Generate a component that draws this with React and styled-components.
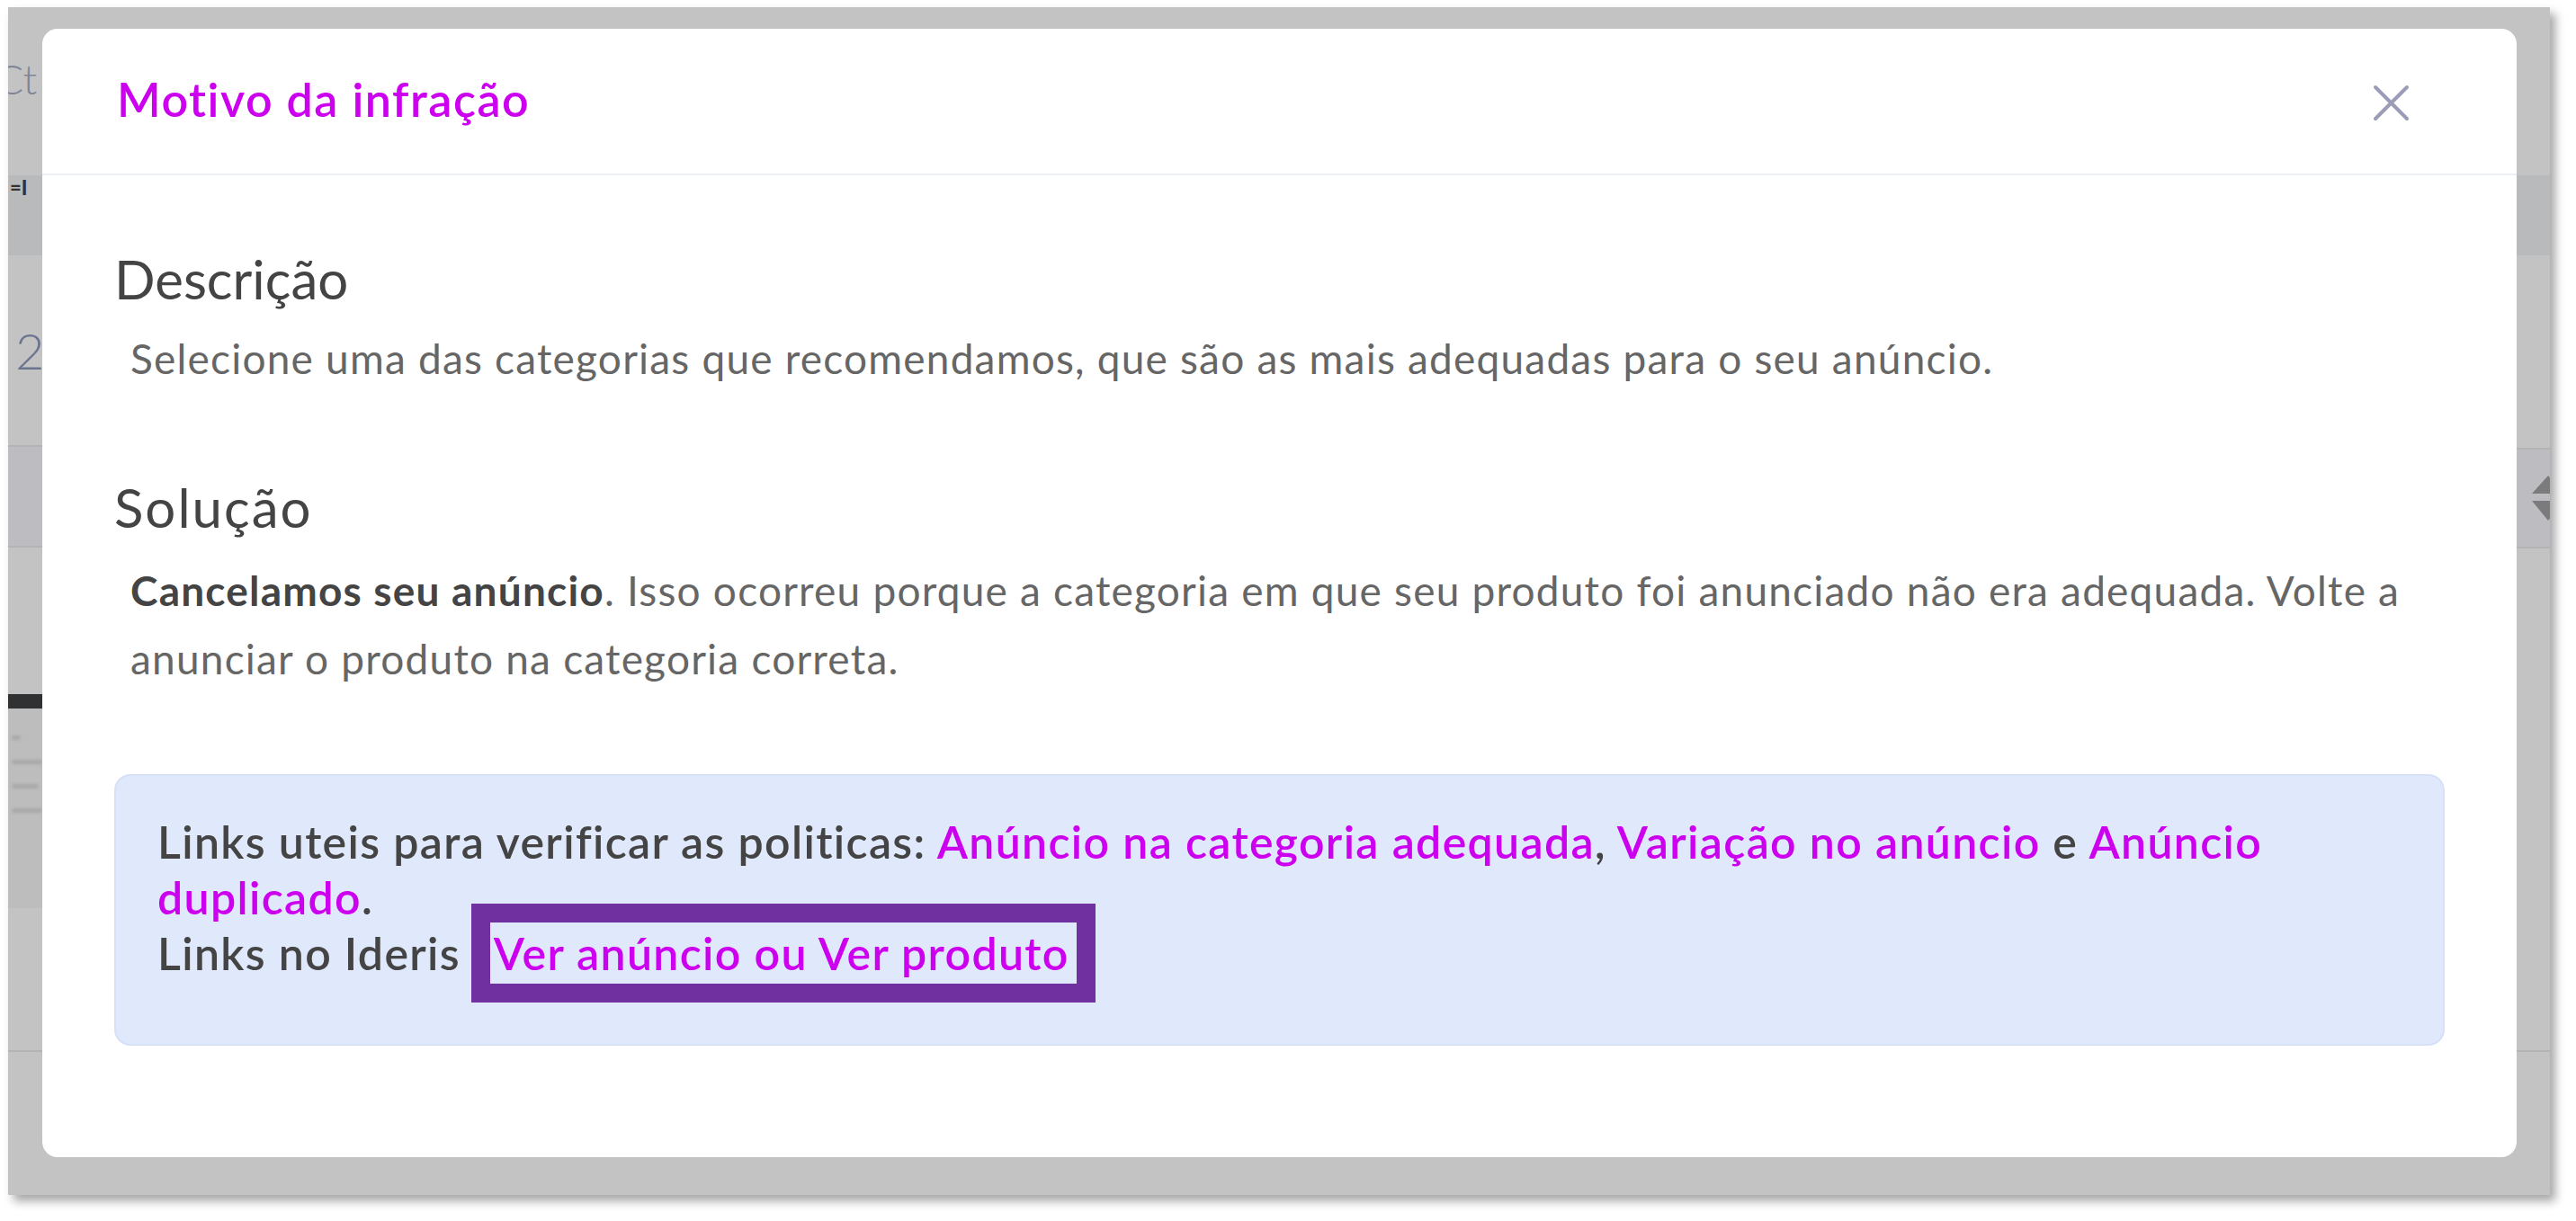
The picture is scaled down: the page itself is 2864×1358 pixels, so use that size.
import React from 'react';
import styled, { createGlobalStyle } from 'styled-components';

const GlobalStyle = createGlobalStyle`
  html, body {
    margin: 0;
    padding: 0;
    background: #ffffff;
  }
  body {
    font-family: Lato, "Open Sans", sans-serif;
  }
`;

const MAGENTA = '#cc00ee';

const Page = styled.div`
  padding: 8px 0 0 9px;
  width: 2864px;
  height: 1358px;
  box-sizing: border-box;
`;

// grey backdrop of the screenshot, with its drop shadow
const Frame = styled.div`
  display: flex;
  width: 2826px;
  height: 1321px;
  background: #c3c3c3;
  box-shadow: 6px 7px 10px rgba(0, 0, 0, 0.35);
`;

const Strip = styled.div`
  width: ${p => p.$w}px;
  flex: none;
  display: flex;
  flex-direction: column;
  overflow: hidden;
`;

const Band = styled.div`
  height: ${p => p.$h}px;
  flex: none;
  background: ${p => p.$bg || '#c3c3c3'};
  border-bottom: ${p => (p.$line ? '2px solid #b4b4b6' : 'none')};
  box-sizing: border-box;
  display: flex;
  align-items: ${p => p.$align || 'center'};
  font-family: Lato, sans-serif;
`;

const Ghost = styled.span`
  font-size: ${p => p.$size}px;
  color: ${p => p.$color};
  font-weight: ${p => p.$weight || 300};
  white-space: nowrap;
  margin: ${p => p.$mt || 0}px 0 0 ${p => p.$ml || 0}px;
`;

const DarkBar = styled.div`
  height: 16px;
  flex: none;
  background: #2f3132;
`;

const Blur = styled.div`
  height: 222px;
  flex: none;
  background: #bdbdbd;
  display: flex;
  flex-direction: column;
  gap: 22px;
  padding: 30px 0 0 4px;
  box-sizing: border-box;
`;

const BlurLine = styled.div`
  height: 5px;
  width: ${p => p.$w}px;
  background: #a9a9a9;
  border-radius: 3px;
  filter: blur(1.5px);
`;

const Center = styled.div`
  flex: 1;
  padding: 24px 0 42px;
  display: flex;
  min-width: 0;
`;

const Modal = styled.div`
  flex: 1;
  background: #ffffff;
  border-radius: 17px;
  display: flex;
  flex-direction: column;
  overflow: hidden;
`;

const Header = styled.div`
  height: 163px;
  box-sizing: border-box;
  border-bottom: 2px solid #eceff4;
  display: flex;
  align-items: center;
  justify-content: space-between;
  padding: 0 119px 6px 83px;
`;

const Title = styled.h1`
  margin: 0;
  font-size: 52px;
  font-weight: 600;
  color: ${MAGENTA};
  letter-spacing: 1.5px;
`;

const Close = styled.button`
  border: none;
  background: none;
  padding: 0;
  width: 41px;
  height: 41px;
  display: flex;
  margin-top: 10px;
  cursor: pointer;
`;

const Body = styled.div`
  padding: 80px 80px 0;
  display: flex;
  flex-direction: column;
`;

const Heading = styled.h2`
  margin: ${p => p.$mt || 0}px 0 0;
  font-size: 60px;
  font-weight: 400;
  line-height: 70px;
  letter-spacing: ${p => p.$ls || 0}px;
  color: #444444;
`;

const Text = styled.p`
  margin: ${p => p.$mt}px 0 0;
  padding-left: 18px;
  font-size: 46px;
  letter-spacing: 1.2px;
  line-height: ${p => p.$lh}px;
  color: #666666;
  b {
    font-weight: 700;
    color: #444444;
  }
`;

const InfoBox = styled.div`
  margin-top: 90px;
  background: #e0e8fb;
  border: 2px solid #d6e0f9;
  border-radius: 18px;
  padding: 42px 40px 70px 46px;
  font-size: 50px;
  font-weight: 600;
  letter-spacing: 1.35px;
  line-height: 62px;
  color: #444444;
`;

const Link = styled.a`
  color: ${MAGENTA};
  text-decoration: none;
`;

// purple annotation drawn around the link
const Highlight = styled.span`
  display: inline-block;
  border: 21px solid #7030a0;
  padding: 3px 8px 3px 4px;
  margin: -24px 0 -24px -2px;
  line-height: 62px;
`;

const XIcon = () => (
  <svg width="41" height="41" viewBox="0 0 41 41">
    <path d="M3 3 L38 38 M38 3 L3 38" stroke="#9a9cb8" strokeWidth="4" strokeLinecap="round" />
  </svg>
);

const SortIcon = () => (
  <svg width="44" height="54" viewBox="0 0 44 54">
    <path d="M22 2 L40 22 L4 22 Z" fill="#7b7b7d" />
    <path d="M4 30 L40 30 L22 52 Z" fill="#7b7b7d" />
  </svg>
);

const LeftStrip = () => (
  <Strip $w={38}>
    <Band $h={187} $align="flex-start">
      <Ghost $size={46} $color="#7e8596" $ml={-14} $mt={52}>Ct</Ghost>
    </Band>
    <Band $h={89} $bg="#b9babc" $align="flex-start">
      <Ghost $size={22} $color="#333" $ml={2} $weight={900}>=I</Ghost>
    </Band>
    <Band $h={213} $line>
      <Ghost $size={56} $color="#6c7590" $ml={8}>2</Ghost>
    </Band>
    <Band $h={112} $bg="#bdbdc1" $line />
    <Band $h={163} />
    <DarkBar />
    <Blur>
      <BlurLine $w={10} />
      <BlurLine $w={34} />
      <BlurLine $w={30} />
      <BlurLine $w={34} />
    </Blur>
    <Band $h={160} $line />
    <Band $h={159} />
  </Strip>
);

const RightStrip = () => (
  <Strip $w={37}>
    <Band $h={187} />
    <Band $h={89} $bg="#b9babc" />
    <Band $h={216} $line />
    <Band $h={110} $bg="#bdbdc1" $line>
      <Ghost $ml={13} $size={0}><SortIcon /></Ghost>
    </Band>
    <Band $h={560} $line />
    <Band $h={161} />
  </Strip>
);

const App = () => (
  <>
    <GlobalStyle />
    <Page>
      <Frame>
        <LeftStrip />
        <Center>
          <Modal>
            <Header>
              <Title>Motivo da infração</Title>
              <Close aria-label="Fechar"><XIcon /></Close>
            </Header>
            <Body>
              <Heading>Descrição</Heading>
              <Text $mt={17} $lh={74}>
                Selecione uma das categorias que recomendamos, que são as mais adequadas para o seu anúncio.
              </Text>
              <Heading $mt={93} $ls={2}>Solução</Heading>
              <Text $mt={20} $lh={76}>
                <b>Cancelamos seu anúncio</b>. Isso ocorreu porque a categoria em que seu produto foi anunciado não era adequada. Volte a anunciar o produto na categoria correta.
              </Text>
              <InfoBox>
                Links uteis para verificar as politicas: <Link href="#">Anúncio na categoria adequada</Link>,{' '}
                <Link href="#">Variação no anúncio</Link> e <Link href="#">Anúncio duplicado</Link>.
                <br />
                Links no Ideris <Highlight><Link href="#">Ver anúncio ou Ver produto</Link></Highlight>
              </InfoBox>
            </Body>
          </Modal>
        </Center>
        <RightStrip />
      </Frame>
    </Page>
  </>
);

export default App;
